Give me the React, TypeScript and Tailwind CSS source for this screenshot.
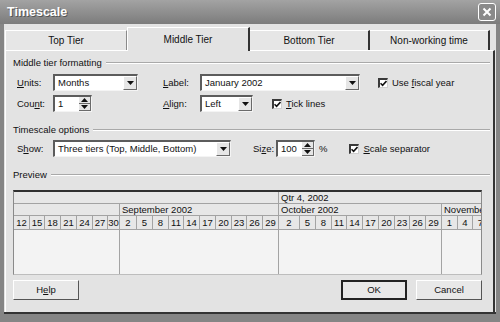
import React from 'react';

const dayCells: [string, number][] = [
  ['12', 16], ['15', 15], ['18', 16], ['21', 16], ['24', 16], ['27', 15], ['30', 12],
  ['2', 17], ['5', 16], ['8', 16], ['11', 15], ['14', 16], ['17', 16], ['20', 16], ['23', 15], ['26', 16], ['29', 16],
  ['2', 21], ['5', 16], ['8', 16], ['11', 15], ['14', 16], ['17', 16], ['20', 16], ['23', 15], ['26', 16], ['29', 16],
  ['1', 16], ['4', 15], ['7', 16]
];

const monthCells: [string, number][] = [['', 106], ['September 2002', 159], ['October 2002', 163]];

function Arrow({ up = false }: { up?: boolean }) {
  return <svg width="7" height="4" viewBox="0 0 7 4" className={up ? 'rotate-180' : ''}>
      <polygon points="0,0 7,0 3.5,4" fill="#111" />
    </svg>;
}

function Combo({ value, className }: { value: string; className: string }) {
  return <div className={`flex h-[17px] bg-white border-t-2 border-l-2 border-t-[#5c5c5c] border-l-[#5c5c5c] border-r border-b border-r-[#f4f4f4] border-b-[#f4f4f4] ${className}`}>
      <span className="flex-1 pl-[3px] flex items-center whitespace-nowrap overflow-hidden">{value}</span>
      <div className="w-[14px] bg-[#e6e6e6] border-t border-l border-white border-r border-b border-r-[#6a6a6a] border-b-[#6a6a6a] flex items-center justify-center">
        <Arrow />
      </div>
    </div>;
}

function Spinner({ value, className }: { value: string; className: string }) {
  return <div className={`flex h-[17px] bg-white border-t-2 border-l-2 border-t-[#5c5c5c] border-l-[#5c5c5c] border-r border-b border-r-[#f4f4f4] border-b-[#f4f4f4] ${className}`}>
      <span className="flex-1 pl-[3px] flex items-center">{value}</span>
      <div className="w-[12px] flex flex-col">
        <div className="flex-1 bg-[#e6e6e6] border-r border-b border-r-[#6a6a6a] border-b-[#6a6a6a] flex items-center justify-center"><Arrow up /></div>
        <div className="flex-1 bg-[#e6e6e6] border-r border-b border-r-[#6a6a6a] border-b-[#6a6a6a] flex items-center justify-center"><Arrow /></div>
      </div>
    </div>;
}

function Check({ children, className = '' }: { children: React.ReactNode; className?: string }) {
  return <div className={`flex items-center gap-[4px] ${className}`}>
      <div className="w-[10px] h-[10px] bg-white border-t-2 border-l-2 border-t-[#3a3a3a] border-l-[#3a3a3a] border-r border-b border-r-[#cfcfcf] border-b-[#cfcfcf] flex items-center justify-center">
        <svg width="7" height="7" viewBox="0 0 7 7">
          <path d="M0.5 3.2 L2.6 5.4 L6.5 1" stroke="#111" strokeWidth="1.6" fill="none" />
        </svg>
      </div>
      <span className="whitespace-nowrap">{children}</span>
    </div>;
}

function Heading({ children }: { children: React.ReactNode }) {
  return <div className="flex items-center gap-[4px] h-[11px]">
      <span className="whitespace-nowrap">{children}</span>
      <div className="flex-1 h-[2px] border-t border-t-[#a9a9a9] border-b border-b-white" />
    </div>;
}

function Button({ children, primary = false }: { children: React.ReactNode; primary?: boolean }) {
  return <div className={`w-[66px] h-[20px] flex items-center justify-center bg-[#e8e8e8] ${primary ? 'border-2 border-[#222]' : 'border border-t-white border-l-white border-r-[#555] border-b-[#555]'}`}>
      {children}
    </div>;
}

const U = ({ c }: { c: string }) => <span className="underline">{c}</span>;

export default function App() {
  return <div className="w-[500px] h-[322px] flex flex-col bg-[#858585] overflow-hidden font-['Liberation_Sans',Arial,sans-serif] text-[9.5px] text-[#111] leading-none">
      {/* Title bar */}
      <div className="h-[24px] flex items-center justify-between pl-[7px] pr-[4px] bg-linear-to-b from-[#a3a3a3] to-[#7c7c7c]">
        <span className="text-white font-bold text-[12.5px] [text-shadow:1px_1px_0_#555]">Timescale</span>
        <div className="w-[18px] h-[18px] rounded-[3px] border border-white bg-[#8a8a8a] flex items-center justify-center">
          <svg width="10" height="10" viewBox="0 0 10 10">
            <path d="M1.5 1.5 L8.5 8.5 M8.5 1.5 L1.5 8.5" stroke="white" strokeWidth="2" />
          </svg>
        </div>
      </div>

      {/* Client */}
      <div className="flex-1 flex flex-col mx-[4px] mb-[8px] bg-[#e3e3e3] pt-[2px] px-[1px] border-b-2 border-b-[#333]">
        {/* Tabs */}
        <div className="h-[24px] flex items-end">
          <div className="w-[122px] h-[20px] flex items-center justify-center text-[10px] border-t border-l border-white border-r border-r-[#8a8a8a] bg-[#e6e6e6]">Top Tier</div>
          <div className="w-[123px] h-[24px] -mb-px z-10 flex items-center justify-center text-[10px] border-t border-l border-white border-r-2 border-r-[#333] bg-[#e3e3e3]">Middle Tier</div>
          <div className="w-[120px] h-[20px] flex items-center justify-center text-[10px] border-t border-white border-r-2 border-r-[#333] bg-[#e6e6e6]">Bottom Tier</div>
          <div className="w-[120px] h-[20px] flex items-center justify-center text-[10px] border-t border-white border-r-2 border-r-[#333] bg-[#e6e6e6]">Non-working time</div>
        </div>

        {/* Panel */}
        <div className="flex-1 flex flex-col border-t border-l border-white border-r-2 border-r-[#333] pl-[7px] pr-[3px] pt-[6px]">
          <Heading>Middle tier formatting</Heading>

          <div className="mt-[6px] flex items-center pl-[4px]">
            <span className="w-[36px]"><U c="U" />nits:</span>
            <Combo value="Months" className="w-[85px]" />
            <span className="w-[37px] ml-[25px]"><U c="L" />abel:</span>
            <Combo value="January 2002" className="w-[160px]" />
            <Check className="ml-[18px]">Use <U c="f" />iscal year</Check>
          </div>

          <div className="mt-[4px] flex items-center pl-[4px]">
            <span className="w-[36px]">Cou<U c="n" />t:</span>
            <Spinner value="1" className="w-[39px]" />
            <span className="w-[37px] ml-[71px]"><U c="A" />lign:</span>
            <Combo value="Left" className="w-[53px]" />
            <Check className="ml-[19px]"><U c="T" />ick lines</Check>
          </div>

          <div className="mt-[12px]">
            <Heading>Timescale options</Heading>
          </div>

          <div className="mt-[5px] flex items-center pl-[4px]">
            <span className="w-[36px]">S<U c="h" />ow:</span>
            <Combo value="Three tiers (Top, Middle, Bottom)" className="w-[178px]" />
            <span className="w-[23px] ml-[22px]">Si<U c="z" />e:</span>
            <Spinner value="100" className="w-[39px]" />
            <span className="ml-[4px]">%</span>
            <Check className="ml-[22px]"><U c="S" />cale separator</Check>
          </div>

          <div className="mt-[12px]">
            <Heading>Preview</Heading>
          </div>

          {/* Preview */}
          <div className="mt-[10px] w-[469px] h-[85px] flex flex-col border-t-2 border-t-[#303030] border-x border-x-[#8a8a8a] border-b border-b-[#bdbdbd] overflow-hidden bg-[#f3f3f3]">
            <div className="h-[12px] flex bg-[#e7e7e7] border-b border-b-[#a3a3a3]">
              <div className="w-[265px] border-r border-r-[#a3a3a3]" />
              <div className="flex-1 pl-[2px] flex items-center">Qtr 4, 2002</div>
            </div>
            <div className="h-[12px] flex bg-[#e7e7e7] border-b border-b-[#a3a3a3]">
              {monthCells.map(([m, w], i) => <div key={i} className="shrink-0 pl-[2px] flex items-center border-r border-r-[#a3a3a3]" style={{ width: w }}>{m}</div>)}
              <div className="flex-1 pl-[2px] flex items-center whitespace-nowrap overflow-hidden">November 2002</div>
            </div>
            <div className="h-[14px] flex bg-[#e7e7e7] border-b border-b-[#a3a3a3] whitespace-nowrap">
              {dayCells.map(([d, w], i) => <div key={i} className="shrink-0 flex items-center justify-center border-r border-r-[#a3a3a3]" style={{ width: w }}>{d}</div>)}
            </div>
            <div className="flex-1 flex">
              {monthCells.map(([, w], i) => <div key={i} className="shrink-0 border-r border-r-[#a3a3a3]" style={{ width: w }} />)}
              <div className="flex-1" />
            </div>
          </div>

          {/* Buttons */}
          <div className="mt-[5px] w-[469px] flex items-center">
            <Button>H<U c="e" />lp</Button>
            <div className="flex-1" />
            <Button primary>OK</Button>
            <div className="w-[9px]" />
            <Button>Cancel</Button>
          </div>
        </div>
      </div>
    </div>;
}
